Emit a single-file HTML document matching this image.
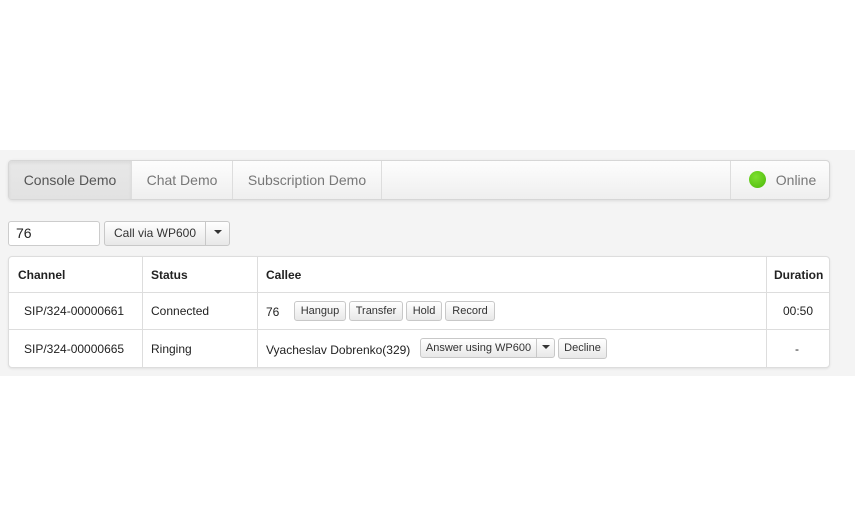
<!DOCTYPE html><html><head><style>
*{box-sizing:border-box;margin:0;padding:0}
body{width:855px;height:528px;background:#fff;font-family:"Liberation Sans",sans-serif;position:relative;overflow:hidden;color:#222}
.g{position:absolute;left:0;top:150px;width:855px;height:226px;background:#f4f4f4}
.a{position:absolute}
.nav{left:8px;top:160px;width:822px;height:40px;border:1px solid #d6d6d6;border-radius:4px;background:linear-gradient(#fdfdfd,#efefef);box-shadow:0 1px 3px rgba(0,0,0,.1)}
.tab{position:absolute;top:0;height:38px;line-height:38px;font-size:14px;color:#777;text-align:center;border-right:1px solid #ddd}
.btn{position:absolute;border:1px solid #c8c8c8;border-radius:3px;background:linear-gradient(#fff,#e8e8e8);font-size:11px;color:#333;text-align:center}
.tb{left:8px;top:256px;width:822px;height:112px;background:#fff;border:1px solid #ddd;border-radius:4px;box-shadow:0 1px 2px rgba(0,0,0,.08)}
.t{position:absolute;font-size:12px;color:#222}
.h{font-weight:bold}
.vl{position:absolute;top:0;width:1px;height:110px;background:#ddd}
.hl{position:absolute;left:0;width:820px;height:1px;background:#ddd}
.car{display:inline-block;width:0;height:0;border-left:4px solid transparent;border-right:4px solid transparent;border-top:4px solid #333;vertical-align:middle}
</style></head><body>
<div class="g"></div>
<div class="a nav">
<div class="tab" style="left:0;width:123px;background:linear-gradient(#e8e8e8,#e2e2e2);color:#555;box-shadow:inset 0 2px 3px rgba(0,0,0,.06)">Console Demo</div>
<div class="tab" style="left:123px;width:101px">Chat Demo</div>
<div class="tab" style="left:224px;width:149px">Subscription Demo</div>
<div class="tab" style="left:721px;width:100px;border-right:0;border-left:1px solid #ddd"><span style="display:inline-block;width:17px;height:17px;border-radius:50%;background:radial-gradient(circle at 40% 35%,#7ee030,#4cb80a);vertical-align:middle;margin:-3px 10px 0 4px"></span>Online</div>
</div>
<div class="a" style="left:8px;top:221px;width:92px;height:25px;border:1px solid #ccc;border-radius:3px;background:#fff;font-size:14px;line-height:23px;padding-left:7px">76</div>
<div class="btn" style="left:104px;top:221px;width:102px;height:25px;line-height:23px;font-size:12px;border-radius:3px 0 0 3px">Call via WP600</div>
<div class="btn" style="left:205px;top:221px;width:25px;height:25px;line-height:21px;border-radius:0 3px 3px 0"><span class="car"></span></div>
<div class="a tb">
<div class="vl" style="left:133px"></div><div class="vl" style="left:248px"></div><div class="vl" style="left:757px"></div>
<div class="hl" style="top:35px"></div><div class="hl" style="top:72px"></div>
<div class="t h" style="left:9px;top:11px">Channel</div>
<div class="t h" style="left:142px;top:11px">Status</div>
<div class="t h" style="left:257px;top:11px">Callee</div>
<div class="t h" style="left:765px;top:11px">Duration</div>
<div class="t" style="left:15px;top:47px">SIP/324-00000661</div>
<div class="t" style="left:142px;top:47px">Connected</div>
<div class="t" style="left:257px;top:48px">76</div>
<div class="t" style="left:774px;top:47px">00:50</div>
<div class="t" style="left:15px;top:85px">SIP/324-00000665</div>
<div class="t" style="left:142px;top:85px">Ringing</div>
<div class="t" style="left:257px;top:86px">Vyacheslav Dobrenko(329)</div>
<div class="t" style="left:786px;top:85px">-</div>
</div>
<div class="btn" style="left:294px;top:301px;width:52px;height:20px;line-height:18px">Hangup</div>
<div class="btn" style="left:349px;top:301px;width:54px;height:20px;line-height:18px">Transfer</div>
<div class="btn" style="left:406px;top:301px;width:36px;height:20px;line-height:18px">Hold</div>
<div class="btn" style="left:445px;top:301px;width:50px;height:20px;line-height:18px">Record</div>
<div class="btn" style="left:420px;top:338px;width:117px;height:20px;line-height:18px;border-radius:3px 0 0 3px">Answer using WP600</div>
<div class="btn" style="left:536px;top:338px;width:19px;height:20px;line-height:16px;border-radius:0 3px 3px 0"><span class="car"></span></div>
<div class="btn" style="left:558px;top:338px;width:49px;height:21px;line-height:19px">Decline</div>
</body></html>
